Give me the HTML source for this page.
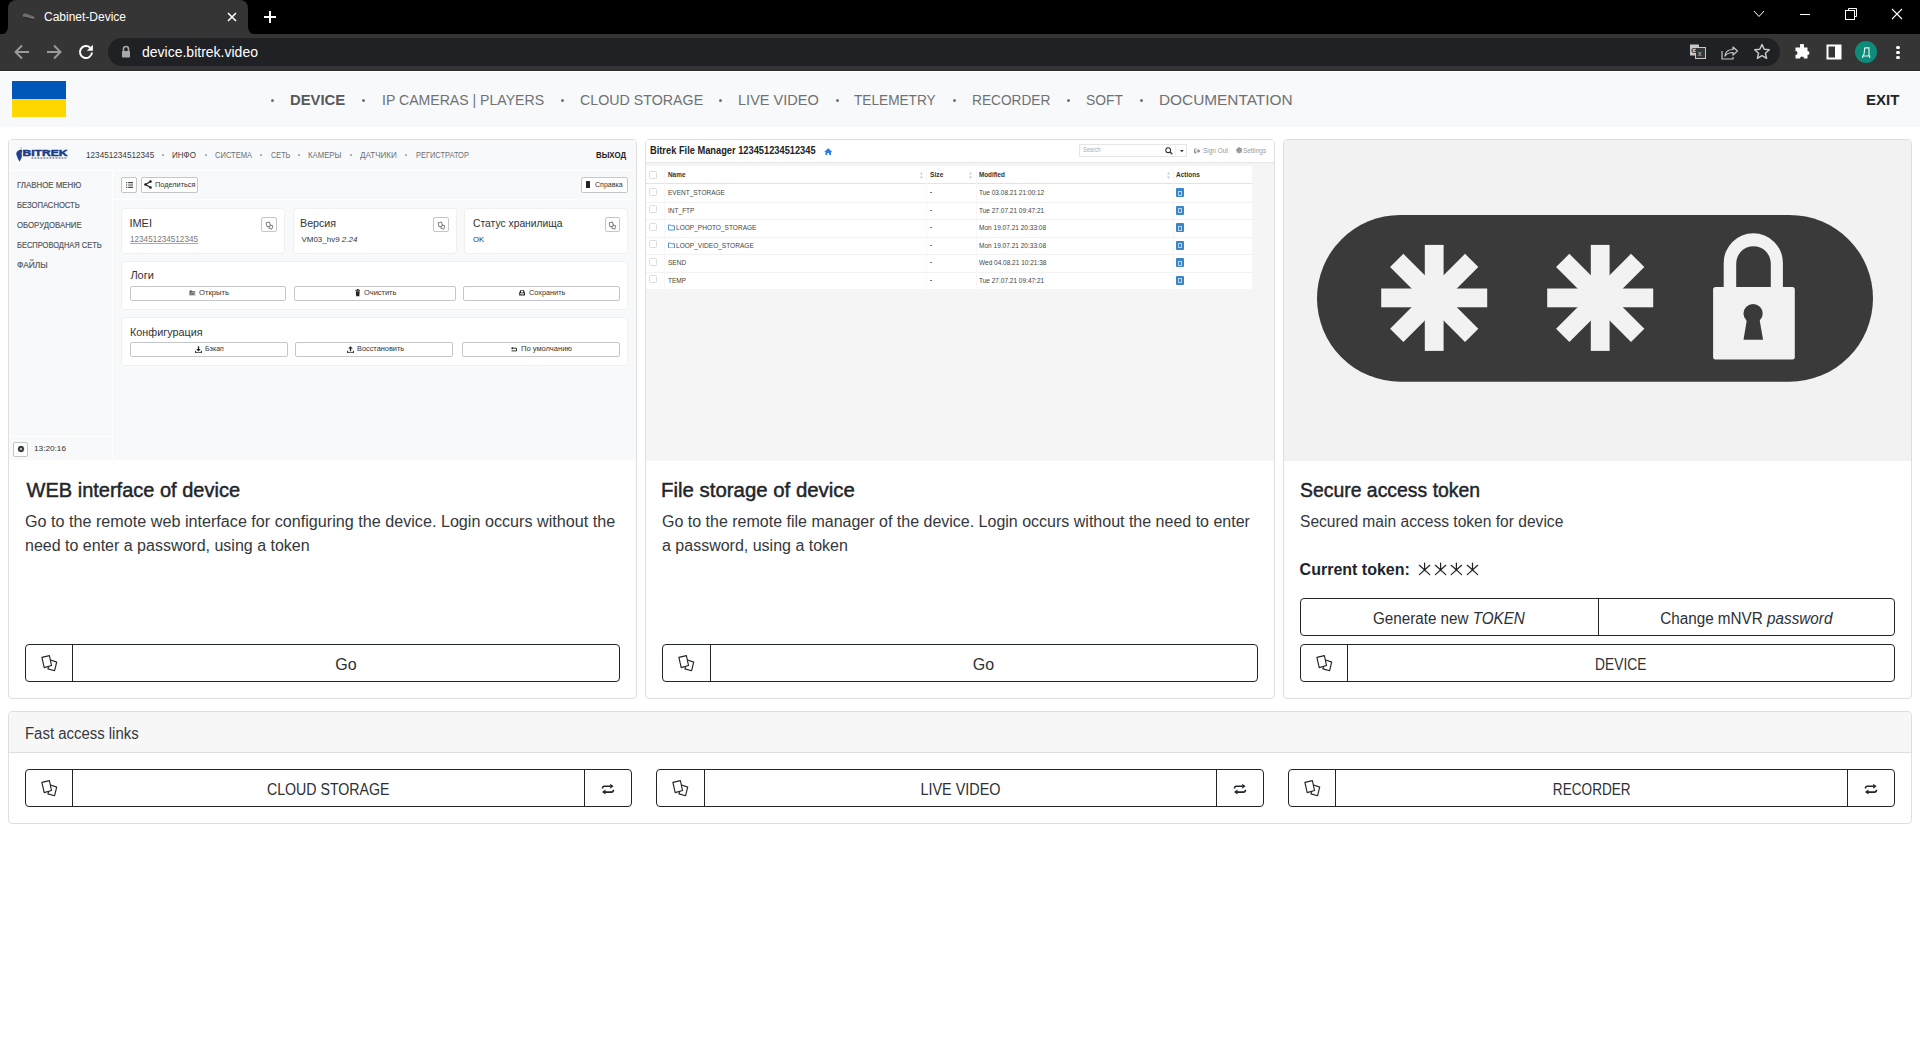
<!DOCTYPE html>
<html><head><meta charset="utf-8">
<style>
*{box-sizing:border-box;margin:0;padding:0}
html,body{width:1920px;height:1040px;overflow:hidden;background:#fff;font-family:"Liberation Sans",sans-serif;color:#212529}
.a{position:absolute}
.t{position:absolute;white-space:nowrap;line-height:1}
/* chrome */
#tabbar{left:0;top:0;width:1920px;height:34px;background:#000}
#tab{left:8px;top:0;width:240px;height:35px;background:#353535;border-radius:8px 8px 0 0}
#toolbar{left:0;top:34px;width:1920px;height:36px;background:#353535}
#sep{left:0;top:70px;width:1920px;height:1px;background:#2a2a2a}
#omni{left:108px;top:38px;width:1672px;height:28px;background:#202124;border-radius:14px}
/* page */
#nav{left:0;top:71px;width:1920px;height:56px;background:#f8f9fa;border-top:1px solid #fff}
.nl{color:#6f7173;font-size:14px}
.dot{position:absolute;width:3px;height:3px;border-radius:50%;background:#6f7173}
.card{position:absolute;border:1px solid #dfdfdf;border-radius:4px;background:#fff;overflow:hidden}
.btn{position:absolute;border:1px solid #212529;border-radius:4px;background:#fff}
.vd{position:absolute;top:0;bottom:0;width:1px;background:#212529}
</style></head><body>
<div id="tabbar" class="a"></div>
<div id="tab" class="a"></div>
<svg class="a" style="left:0;top:26px" width="8" height="9"><path d="M0 9 A8 8 0 0 0 8 1 L8 9 Z" fill="#353535"/></svg>
<svg class="a" style="left:248px;top:26px" width="8" height="9"><path d="M8 9 A8 8 0 0 1 0 1 L0 9 Z" fill="#353535"/></svg>
<div id="toolbar" class="a"></div>
<div id="sep" class="a"></div>
<div id="omni" class="a"></div>
<svg class="a" style="left:21px;top:12px" width="15" height="9"><path d="M1.5 2.5 L4 1.2 L13 4.5 L13.5 6.5 L11.5 8 L2.5 5 Z" fill="#6e6e6e"/><path d="M4 4.8 L13 7.6 L11.5 8.3 L2.8 5.5 Z" fill="#1e1e1e"/></svg>
<div class="t" style="left:44px;top:10.5px;font-size:12px;color:#fff">Cabinet-Device</div>
<svg class="a" style="left:227px;top:12px" width="10" height="10"><path d="M1 1 L9 9 M9 1 L1 9" stroke="#fff" stroke-width="1.6"/></svg>
<svg class="a" style="left:263px;top:10px" width="14" height="14"><path d="M7 1 V13 M1 7 H13" stroke="#fff" stroke-width="2"/></svg>
<svg class="a" style="left:1753px;top:10px" width="12" height="8"><path d="M1 1 L6 6.5 L11 1" stroke="#fff" stroke-width="1" fill="none"/></svg>
<div class="a" style="left:1800px;top:14px;width:10px;height:1px;background:#fff"></div>
<svg class="a" style="left:1845px;top:8px" width="12" height="12"><path d="M3.5 2.5 V0.5 H11.5 V8.5 H9.5" stroke="#fff" stroke-width="1" fill="none"/><rect x="0.5" y="2.5" width="9" height="9" stroke="#fff" stroke-width="1" fill="none"/></svg>
<svg class="a" style="left:1891px;top:8px" width="12" height="12"><path d="M1 1 L11 11 M11 1 L1 11" stroke="#fff" stroke-width="1.1"/></svg>
<svg class="a" style="left:14px;top:44px" width="16" height="16"><path d="M15 8 H2 M8 1.5 L1.5 8 L8 14.5" stroke="#9b9b9b" stroke-width="1.9" fill="none"/></svg>
<svg class="a" style="left:46px;top:44px" width="16" height="16"><path d="M1 8 H14 M8 1.5 L14.5 8 L8 14.5" stroke="#9b9b9b" stroke-width="1.9" fill="none"/></svg>
<svg class="a" style="left:78px;top:44px" width="16" height="16"><path d="M13.98 8.52 A6 6 0 1 1 12.2 3.7" stroke="#fff" stroke-width="2" fill="none"/><path d="M8.8 6.7 L14.9 6.7 L14.9 0.8 Z" fill="#fff"/></svg>
<svg class="a" style="left:121px;top:45px" width="10" height="13"><path d="M2.5 6 V4 A2.5 2.5 0 0 1 7.5 4 V6" stroke="#a8a8a8" stroke-width="1.6" fill="none"/><rect x="1" y="6" width="8" height="6.5" rx="0.8" fill="#a8a8a8"/></svg>
<div class="t" style="left:142px;top:44.9px;font-size:14px;color:#fff">device.bitrek.video</div>
<svg class="a" style="left:1689px;top:44px" width="18" height="16"><rect x="1" y="0.5" width="9" height="11" fill="#c8c8c8"/><rect x="6.5" y="3.5" width="10" height="11" fill="#353535" stroke="#c8c8c8" stroke-width="1"/><text x="2" y="9" font-size="8" font-family="Liberation Sans" fill="#353535" font-weight="bold">G</text><text x="9" y="12" font-size="7" font-family="Liberation Sans" fill="#c8c8c8">x</text></svg>
<svg class="a" style="left:1721px;top:44px" width="18" height="16"><path d="M1 7 V15 H12 V13" stroke="#c8c8c8" stroke-width="1.2" fill="none"/><path d="M4 12 C4.5 7 8 5.5 12 5.5 V3 L16.5 7 L12 11 V8.5 C8.5 8.5 6 9.5 4 12 Z" stroke="#c8c8c8" stroke-width="1.2" fill="none" stroke-linejoin="round"/></svg>
<svg class="a" style="left:1753px;top:43px" width="18" height="17"><path d="M9 1.5 L11.2 6.3 L16.3 6.8 L12.4 10.2 L13.6 15.3 L9 12.6 L4.4 15.3 L5.6 10.2 L1.7 6.8 L6.8 6.3 Z" stroke="#c8c8c8" stroke-width="1.5" fill="none" stroke-linejoin="round"/></svg>
<svg class="a" style="left:1794px;top:44px" width="16" height="16"><path d="M6 1.5 A2 2 0 0 1 10 1.5 V3.5 H13.5 V7 A2 2 0 0 1 13.5 11 V14.5 H10 A2 2 0 0 0 6 14.5 H1.5 V11 A2 2 0 0 0 1.5 7 V3.5 H6 Z" fill="#fff"/></svg>
<svg class="a" style="left:1826px;top:44px" width="16" height="16"><rect x="1.5" y="1.5" width="13" height="13" fill="none" stroke="#fff" stroke-width="2"/><rect x="9" y="1.5" width="5.5" height="13" fill="#fff"/></svg>
<div class="a" style="left:1855px;top:41px;width:22px;height:22px;border-radius:50%;background:#0f8b7a"></div>
<svg class="a" style="left:1860px;top:45.5px" width="12" height="14"><path d="M4.6 1.8 H9 V10 M4.6 1.8 C4.6 5.8 4.1 8.6 3 10 M2.1 10 H10.2 M2.6 9.8 V12 M9.7 9.8 V12" stroke="#dff5f1" stroke-width="1.15" fill="none"/></svg>
<div class="a" style="left:1896.2px;top:45.5px;width:3.6px;height:3.6px;border-radius:50%;background:#fff"></div>
<div class="a" style="left:1896.2px;top:50.5px;width:3.6px;height:3.6px;border-radius:50%;background:#fff"></div>
<div class="a" style="left:1896.2px;top:55.5px;width:3.6px;height:3.6px;border-radius:50%;background:#fff"></div>
<div id="nav" class="a"></div>
<div class="a" style="left:12px;top:81px;width:54px;height:18px;background:#0057b8"></div>
<div class="a" style="left:12px;top:99px;width:54px;height:18px;background:#ffd700"></div>

<div class="t nl" style="left:290.0px;top:91.8px;font-size:15px;font-weight:700;color:#57595c;transform:scaleX(0.989);transform-origin:0 0;">DEVICE</div>
<div class="t nl" style="left:381.5px;top:91.8px;font-size:15px;transform:scaleX(0.939);transform-origin:0 0;">IP CAMERAS | PLAYERS</div>
<div class="t nl" style="left:579.6px;top:91.8px;font-size:15px;transform:scaleX(0.949);transform-origin:0 0;">CLOUD STORAGE</div>
<div class="t nl" style="left:738.0px;top:91.8px;font-size:15px;transform:scaleX(0.970);transform-origin:0 0;">LIVE VIDEO</div>
<div class="t nl" style="left:854.1px;top:91.8px;font-size:15px;transform:scaleX(0.910);transform-origin:0 0;">TELEMETRY</div>
<div class="t nl" style="left:972.1px;top:91.8px;font-size:15px;transform:scaleX(0.913);transform-origin:0 0;">RECORDER</div>
<div class="t nl" style="left:1085.8px;top:91.8px;font-size:15px;transform:scaleX(0.923);transform-origin:0 0;">SOFT</div>
<div class="t nl" style="left:1158.6px;top:91.8px;font-size:15px;transform:scaleX(1.025);transform-origin:0 0;">DOCUMENTATION</div>
<div class="dot" style="left:270.5px;top:99px"></div>
<div class="dot" style="left:361.5px;top:99px"></div>
<div class="dot" style="left:560.5px;top:99px"></div>
<div class="dot" style="left:719.0px;top:99px"></div>
<div class="dot" style="left:835.5px;top:99px"></div>
<div class="dot" style="left:952.5px;top:99px"></div>
<div class="dot" style="left:1066.5px;top:99px"></div>
<div class="dot" style="left:1140.0px;top:99px"></div>
<div class="t" style="left:1866px;top:91.8px;font-size:15px;font-weight:700;color:#212529">EXIT</div>
<div class="card" style="left:8px;top:139px;width:629px;height:560px"><div id="img1" class="a" style="left:0;top:0;width:627px;height:320px;background:#f8f9fa"></div></div>
<div class="card" style="left:645px;top:139px;width:630px;height:560px"><div id="img2" class="a" style="left:0;top:0;width:628px;height:321px;background:#f5f5f5"></div></div>
<div class="card" style="left:1283px;top:139px;width:629px;height:560px"><div id="img3" class="a" style="left:0;top:0;width:627px;height:321px;background:#f2f2f2"></div></div>
<!--IMG1-->
<div class="a" style="left:9px;top:140px;width:627.0px;height:319.0px;background:#f8f9fa"></div>
<div class="a" style="left:9px;top:169.5px;width:627.0px;height:1.0px;background:#fff"></div>
<div class="a" style="left:112px;top:170px;width:1.0px;height:289.0px;background:#fff"></div>
<div class="a" style="left:113px;top:198.5px;width:523.0px;height:1.0px;background:#fff"></div>
<div class="a" style="left:9px;top:435.5px;width:103.0px;height:1.0px;background:#fff"></div>
<svg class="a" style="left:12px;top:144px" width="60" height="20"><path d="M4.2 10.2 C4.2 7.5 6.5 5.8 9.3 5.5 L10.3 6.5 L9.6 9.5 L10 12.5 L9.2 14.5 L7.6 17.8 L5.8 14.5 Z" fill="#22408f"/><path d="M8.5 4 L10 3.8" stroke="#8899cc" stroke-width="0.8"/><text x="10.5" y="12" font-family="Liberation Sans" font-weight="bold" font-size="9.4" fill="#1d3a86" stroke="#1d3a86" stroke-width="0.5" textLength="45" lengthAdjust="spacingAndGlyphs">BITREK</text><path d="M19.5 14 H55.6" stroke="#7d839c" stroke-width="1.4" stroke-dasharray="1.8 1.2"/></svg>
<div class="a" style="left:162px;top:154px;width:2px;height:2px;border-radius:50%;background:#999"></div>
<div class="a" style="left:205px;top:154px;width:2px;height:2px;border-radius:50%;background:#999"></div>
<div class="a" style="left:260px;top:154px;width:2px;height:2px;border-radius:50%;background:#999"></div>
<div class="a" style="left:298px;top:154px;width:2px;height:2px;border-radius:50%;background:#999"></div>
<div class="a" style="left:349.5px;top:154px;width:2px;height:2px;border-radius:50%;background:#999"></div>
<div class="a" style="left:405px;top:154px;width:2px;height:2px;border-radius:50%;background:#999"></div>
<div class="a" style="left:121.2px;top:176.5px;width:15.6px;height:16.0px;background:#fff;border:1px solid #c4c6c8;border-radius:2px;"></div>
<svg class="a" style="left:125.5px;top:181.5px" width="7" height="6"><path d="M0 0.6H1.2M0 3H1.2M0 5.4H1.2M2.2 0.6H7M2.2 3H7M2.2 5.4H7" stroke="#444" stroke-width="1.1"/></svg>
<div class="a" style="left:140.5px;top:176.5px;width:57.2px;height:16.0px;background:#fff;border:1px solid #c4c6c8;border-radius:2px;"></div>
<svg class="a" style="left:144px;top:180px" width="8" height="9"><path d="M6.5 1.5 L1.5 4.5 L6.5 7.5" stroke="#222" stroke-width="1.2" fill="none"/><circle cx="6.5" cy="1.5" r="1.3" fill="#222"/><circle cx="1.5" cy="4.5" r="1.3" fill="#222"/><circle cx="6.5" cy="7.5" r="1.3" fill="#222"/></svg>
<div class="a" style="left:581px;top:176.5px;width:47.0px;height:16.0px;background:#fff;border:1px solid #c4c6c8;border-radius:2px;"></div>
<div class="a" style="left:586px;top:181px;width:4.0px;height:7.0px;background:#222;border-radius:0.5px"></div>
<div class="a" style="left:122px;top:209px;width:162.0px;height:44.0px;background:#fff;border-radius:3px;box-shadow:0 0 0 1px #eef0f2;"></div>
<div class="a" style="left:293.5px;top:209px;width:162.5px;height:44.0px;background:#fff;border-radius:3px;box-shadow:0 0 0 1px #eef0f2;"></div>
<div class="a" style="left:464.7px;top:209px;width:162.3px;height:44.0px;background:#fff;border-radius:3px;box-shadow:0 0 0 1px #eef0f2;"></div>
<div class="a" style="left:261.3px;top:217.3px;width:15.4px;height:15.1px;background:#fff;border:1px solid #c4c6c8;border-radius:2px;"></div>
<svg class="a" style="left:264.8px;top:220.5px" width="9" height="9"><path d="M4.8 3.8 L7.8 4.8 L6.8 8.2 L3.8 7.2 Z" fill="#fff" stroke="#555" stroke-width="0.75"/><path d="M1.2 1.8 L4.6 1 L5.4 5 L2 5.8 Z" fill="#fff" stroke="#555" stroke-width="0.75"/></svg>
<div class="a" style="left:433.2px;top:217.3px;width:15.4px;height:15.1px;background:#fff;border:1px solid #c4c6c8;border-radius:2px;"></div>
<svg class="a" style="left:436.7px;top:220.5px" width="9" height="9"><path d="M4.8 3.8 L7.8 4.8 L6.8 8.2 L3.8 7.2 Z" fill="#fff" stroke="#555" stroke-width="0.75"/><path d="M1.2 1.8 L4.6 1 L5.4 5 L2 5.8 Z" fill="#fff" stroke="#555" stroke-width="0.75"/></svg>
<div class="a" style="left:604.7px;top:217.3px;width:15.4px;height:15.1px;background:#fff;border:1px solid #c4c6c8;border-radius:2px;"></div>
<svg class="a" style="left:608.2px;top:220.5px" width="9" height="9"><path d="M4.8 3.8 L7.8 4.8 L6.8 8.2 L3.8 7.2 Z" fill="#fff" stroke="#555" stroke-width="0.75"/><path d="M1.2 1.8 L4.6 1 L5.4 5 L2 5.8 Z" fill="#fff" stroke="#555" stroke-width="0.75"/></svg>
<div class="a" style="left:122px;top:262px;width:505.0px;height:46.5px;background:#fff;border-radius:3px;box-shadow:0 0 0 1px #eef0f2;"></div>
<div class="a" style="left:122px;top:318px;width:505.0px;height:46.5px;background:#fff;border-radius:3px;box-shadow:0 0 0 1px #eef0f2;"></div>
<div class="a" style="left:130px;top:285.7px;width:156.4px;height:14.9px;background:#fff;border:1px solid #c4c6c8;border-radius:2px;"></div>
<div class="a" style="left:294px;top:285.7px;width:161.5px;height:14.9px;background:#fff;border:1px solid #c4c6c8;border-radius:2px;"></div>
<div class="a" style="left:463.3px;top:285.7px;width:156.4px;height:14.9px;background:#fff;border:1px solid #c4c6c8;border-radius:2px;"></div>
<div class="a" style="left:130px;top:341.5px;width:157.7px;height:15.8px;background:#fff;border:1px solid #c4c6c8;border-radius:2px;"></div>
<div class="a" style="left:295.4px;top:341.5px;width:158.1px;height:15.8px;background:#fff;border:1px solid #c4c6c8;border-radius:2px;"></div>
<div class="a" style="left:461.7px;top:341.5px;width:158.0px;height:15.8px;background:#fff;border:1px solid #c4c6c8;border-radius:2px;"></div>
<svg class="a" style="left:188.9px;top:290.2px" width="7" height="6"><path d="M0.5 0.5 H2.8 L3.4 1.2 H6.2 V5.5 H0.5 Z" fill="#555"/><path d="M1.2 5.4 L2.2 2.6 H6.6 L5.6 5.4 Z" fill="#fff"/><path d="M1.5 5 L2.4 3 H6 L5.2 5 Z" fill="#777"/></svg>
<svg class="a" style="left:354.8px;top:289.3px" width="5.5" height="7.5"><path d="M0.3 1.3 H5.2 M2 0.5 H3.5" stroke="#222" stroke-width="1"/><path d="M0.8 2.2 H4.7 L4.3 7.2 H1.2 Z" fill="#222"/></svg>
<svg class="a" style="left:519px;top:290.4px" width="6.2" height="5.6"><path d="M1.2 0.3 H5 L6 3 V5.4 H0.2 V3 Z" fill="#222"/><rect x="1.2" y="3.3" width="3.8" height="1.1" fill="#fff"/><rect x="2" y="0.9" width="2.2" height="1.6" fill="#fff"/></svg>
<svg class="a" style="left:194.7px;top:345.6px" width="7" height="7.5"><path d="M3.5 0.3 V4.6" stroke="#222" stroke-width="1.3"/><path d="M1.3 3 L3.5 5.4 L5.7 3 Z" fill="#222"/><path d="M0.6 4.8 V6.8 H6.4 V4.8" stroke="#333" stroke-width="1.1" fill="none"/></svg>
<svg class="a" style="left:346.9px;top:345.6px" width="7" height="7.5"><path d="M3.5 2 V5.3" stroke="#222" stroke-width="1.3"/><path d="M1.2 2.6 L3.5 0.2 L5.8 2.6 Z" fill="#222"/><path d="M0.6 4.8 V6.8 H6.4 V4.8" stroke="#333" stroke-width="1.1" fill="none"/></svg>
<svg class="a" style="left:511.2px;top:347px" width="6" height="5"><path d="M0.5 1.2 H5.5 M5.5 3.9 H0.5 M5.5 1.2 V3.9" stroke="#333" stroke-width="1"/><path d="M2 0 L0 1.2 L2 2.4 Z" fill="#333"/></svg>
<div class="a" style="left:13px;top:441.5px;width:14.7px;height:15.0px;background:#fff;border:1px solid #c4c6c8;border-radius:2px;"></div>
<svg class="a" style="left:16.5px;top:445px" width="8" height="8"><circle cx="4" cy="4" r="2.2" fill="none" stroke="#222" stroke-width="1.4"/><path d="M4 0.8V7.2M0.8 4H7.2M1.7 1.7L6.3 6.3M6.3 1.7L1.7 6.3" stroke="#222" stroke-width="0.9"/><circle cx="4" cy="4" r="0.9" fill="#fff"/></svg>
<div class="t" style="left:85.5px;top:150.9px;font-size:8.4px;color:#3a3d40;transform:scaleX(0.976);transform-origin:0 0;">123451234512345</div>
<div class="t" style="left:172.0px;top:150.9px;font-size:8.4px;color:#3a3d40;transform:scaleX(0.960);transform-origin:0 0;">ИНФО</div>
<div class="t" style="left:215.0px;top:150.9px;font-size:8.4px;color:#6c6f73;transform:scaleX(0.902);transform-origin:0 0;">СИСТЕМА</div>
<div class="t" style="left:270.5px;top:150.9px;font-size:8.4px;color:#6c6f73;transform:scaleX(0.873);transform-origin:0 0;">СЕТЬ</div>
<div class="t" style="left:308.0px;top:150.9px;font-size:8.4px;color:#6c6f73;transform:scaleX(0.925);transform-origin:0 0;">КАМЕРЫ</div>
<div class="t" style="left:359.7px;top:150.9px;font-size:8.4px;color:#6c6f73;transform:scaleX(0.963);transform-origin:0 0;">ДАТЧИКИ</div>
<div class="t" style="left:415.5px;top:150.9px;font-size:8.4px;color:#6c6f73;transform:scaleX(0.890);transform-origin:0 0;">РЕГИСТРАТОР</div>
<div class="t" style="left:595.5px;top:150.9px;font-size:8.4px;font-weight:700;color:#222;transform:scaleX(0.938);transform-origin:0 0;">ВЫХОД</div>
<div class="t" style="left:17.0px;top:180.9px;font-size:8.4px;color:#505357;-webkit-text-stroke:0.15px #505357;transform:scaleX(0.941);transform-origin:0 0;">ГЛАВНОЕ МЕНЮ</div>
<div class="t" style="left:17.0px;top:200.9px;font-size:8.4px;color:#505357;-webkit-text-stroke:0.15px #505357;transform:scaleX(0.913);transform-origin:0 0;">БЕЗОПАСНОСТЬ</div>
<div class="t" style="left:17.0px;top:220.9px;font-size:8.4px;color:#505357;-webkit-text-stroke:0.15px #505357;transform:scaleX(0.929);transform-origin:0 0;">ОБОРУДОВАНИЕ</div>
<div class="t" style="left:17.0px;top:240.9px;font-size:8.4px;color:#505357;-webkit-text-stroke:0.15px #505357;transform:scaleX(0.895);transform-origin:0 0;">БЕСПРОВОДНАЯ СЕТЬ</div>
<div class="t" style="left:17.0px;top:260.9px;font-size:8.4px;color:#505357;-webkit-text-stroke:0.15px #505357;">ФАЙЛЫ</div>
<div class="t" style="left:154.7px;top:181.2px;font-size:8px;color:#333;transform:scaleX(0.916);transform-origin:0 0;">Поделиться</div>
<div class="t" style="left:595.0px;top:181.2px;font-size:8px;color:#333;transform:scaleX(0.884);transform-origin:0 0;">Справка</div>
<div class="t" style="left:129.4px;top:217.7px;font-size:11px;color:#333;">IMEI</div>
<div class="t" style="left:130.4px;top:235.2px;font-size:8.4px;color:#7a7a7a;text-decoration:underline;text-decoration-color:#aaa;transform:scaleX(0.973);transform-origin:0 0;">123451234512345</div>
<div class="t" style="left:300.4px;top:217.7px;font-size:11px;color:#333;transform:scaleX(0.972);transform-origin:0 0;">Версия</div>
<div class="t" style="left:301.4px;top:235.8px;font-size:8px;color:#333;">VM03_hv9 <i>2.24</i></div>
<div class="t" style="left:473.0px;top:217.7px;font-size:11px;color:#333;transform:scaleX(0.938);transform-origin:0 0;">Статус хранилища</div>
<div class="t" style="left:473.0px;top:235.8px;font-size:8px;color:#333;transform:scaleX(0.955);transform-origin:0 0;">OK</div>
<div class="t" style="left:130.4px;top:270.4px;font-size:11px;color:#333;">Логи</div>
<div class="t" style="left:129.5px;top:326.5px;font-size:11px;color:#333;transform:scaleX(0.983);transform-origin:0 0;">Конфигурация</div>
<div class="t" style="left:199.4px;top:289.2px;font-size:8px;color:#333;transform:scaleX(0.952);transform-origin:0 0;">Открыть</div>
<div class="t" style="left:364.4px;top:289.2px;font-size:8px;color:#333;transform:scaleX(0.929);transform-origin:0 0;">Очистить</div>
<div class="t" style="left:529.0px;top:289.2px;font-size:8px;color:#333;transform:scaleX(0.915);transform-origin:0 0;">Сохранить</div>
<div class="t" style="left:205.2px;top:345.2px;font-size:8px;color:#333;transform:scaleX(0.859);transform-origin:0 0;">Бэкап</div>
<div class="t" style="left:357.1px;top:345.2px;font-size:8px;color:#333;transform:scaleX(0.920);transform-origin:0 0;">Восстановить</div>
<div class="t" style="left:521.0px;top:345.2px;font-size:8px;color:#333;transform:scaleX(0.943);transform-origin:0 0;">По умолчанию</div>
<div class="t" style="left:33.7px;top:444.7px;font-size:8px;color:#333;transform:scaleX(1.027);transform-origin:0 0;">13:20:16</div>
<!--/IMG1-->
<!--IMG2-->
<div class="a" style="left:646px;top:140px;width:628.0px;height:320.0px;background:#f5f5f5"></div>
<div class="a" style="left:646px;top:140px;width:628.0px;height:21.5px;background:#fff"></div>
<div class="a" style="left:646px;top:161.5px;width:628.0px;height:1.5px;background:#e6e6e6"></div>
<div class="a" style="left:646px;top:165.7px;width:605.7px;height:123.3px;background:#fff"></div>
<div class="a" style="left:646px;top:182.5px;width:605.7px;height:1.5px;background:#e3e3e3"></div>
<div class="a" style="left:646px;top:201.5px;width:605.7px;height:0.8px;background:#f2f2f2"></div>
<div class="a" style="left:646px;top:219px;width:605.7px;height:0.8px;background:#f2f2f2"></div>
<div class="a" style="left:646px;top:236.5px;width:605.7px;height:0.8px;background:#f2f2f2"></div>
<div class="a" style="left:646px;top:254px;width:605.7px;height:0.8px;background:#f2f2f2"></div>
<div class="a" style="left:646px;top:271.5px;width:605.7px;height:0.8px;background:#f2f2f2"></div>
<div class="a" style="left:664.3px;top:165.7px;width:0.8px;height:123.3px;background:#f7f7f7"></div>
<div class="a" style="left:926.2px;top:165.7px;width:0.8px;height:123.3px;background:#f7f7f7"></div>
<div class="a" style="left:975.8px;top:165.7px;width:0.8px;height:123.3px;background:#f7f7f7"></div>
<div class="a" style="left:1173.3px;top:165.7px;width:0.8px;height:123.3px;background:#f7f7f7"></div>
<div class="a" style="left:649px;top:170.7px;width:8.0px;height:8.0px;border:1px solid #ddd;border-radius:1.5px;background:#fff"></div>
<div class="a" style="left:649px;top:187.8px;width:8.0px;height:8.0px;border:1px solid #ddd;border-radius:1.5px;background:#fff"></div>
<div class="a" style="left:649px;top:205.3px;width:8.0px;height:8.0px;border:1px solid #ddd;border-radius:1.5px;background:#fff"></div>
<div class="a" style="left:649px;top:222.8px;width:8.0px;height:8.0px;border:1px solid #ddd;border-radius:1.5px;background:#fff"></div>
<div class="a" style="left:649px;top:240.3px;width:8.0px;height:8.0px;border:1px solid #ddd;border-radius:1.5px;background:#fff"></div>
<div class="a" style="left:649px;top:257.8px;width:8.0px;height:8.0px;border:1px solid #ddd;border-radius:1.5px;background:#fff"></div>
<div class="a" style="left:649px;top:275.3px;width:8.0px;height:8.0px;border:1px solid #ddd;border-radius:1.5px;background:#fff"></div>
<svg class="a" style="left:920.3px;top:171.5px" width="3" height="7"><path d="M1.5 0 L3 2.5 H0 Z M1.5 7 L3 4.5 H0 Z" fill="#ccc"/></svg>
<svg class="a" style="left:969.3px;top:171.5px" width="3" height="7"><path d="M1.5 0 L3 2.5 H0 Z M1.5 7 L3 4.5 H0 Z" fill="#ccc"/></svg>
<svg class="a" style="left:1166.5px;top:171.5px" width="3" height="7"><path d="M1.5 0 L3 2.5 H0 Z M1.5 7 L3 4.5 H0 Z" fill="#ccc"/></svg>
<svg class="a" style="left:823.5px;top:147.5px" width="8.5" height="7.5"><path d="M4.25 0.3 L8.3 4 H7 V7.3 H5.2 V5 H3.3 V7.3 H1.5 V4 H0.2 Z" fill="#2a7de1"/></svg>
<div class="a" style="left:1079.2px;top:144px;width:108.3px;height:13.3px;border:1px solid #e6e6e6;background:#fff"></div>
<div class="a" style="left:1175px;top:144px;width:0.8px;height:13.3px;background:#eee"></div>
<svg class="a" style="left:1165px;top:147px" width="8" height="8"><circle cx="3.2" cy="3.2" r="2.4" fill="none" stroke="#333" stroke-width="1.1"/><path d="M5 5 L7.3 7.3" stroke="#333" stroke-width="1.3"/></svg>
<svg class="a" style="left:1179.5px;top:149.5px" width="4" height="3"><path d="M0 0 H3.6 L1.8 2.2 Z" fill="#333"/></svg>
<svg class="a" style="left:1194px;top:147.5px" width="7" height="6"><path d="M0.5 1 H2.5 M0.5 1 V5 H2.5 M2.5 3 H5 M4 1.5 L6 3 L4 4.5 Z" stroke="#999" stroke-width="1" fill="#999"/></svg>
<svg class="a" style="left:1235.5px;top:147.3px" width="6.5" height="6.5"><circle cx="3.25" cy="3.25" r="2" fill="none" stroke="#999" stroke-width="1.6"/><path d="M3.25 0 V6.5 M0 3.25 H6.5 M1 1 L5.5 5.5 M5.5 1 L1 5.5" stroke="#999" stroke-width="1"/></svg>
<svg class="a" style="left:667.5px;top:224.0px" width="7" height="6.5"><path d="M0.5 1 H2.8 L3.5 1.8 H6.5 V6 H0.5 Z" fill="none" stroke="#3d8bd6" stroke-width="0.9"/></svg>
<svg class="a" style="left:667.5px;top:241.5px" width="7" height="6.5"><path d="M0.5 1 H2.8 L3.5 1.8 H6.5 V6 H0.5 Z" fill="none" stroke="#3d8bd6" stroke-width="0.9"/></svg>
<div class="a" style="left:1176.2px;top:188.2px;width:8.0px;height:9.0px;background:#3a85c5;border-radius:1px"></div>
<div class="a" style="left:1178.3px;top:190.5px;width:3.8px;height:5.0px;border:0.8px solid #b8d3ee;border-radius:0.5px"></div>
<div class="a" style="left:1176.2px;top:205.7px;width:8.0px;height:9.0px;background:#3a85c5;border-radius:1px"></div>
<div class="a" style="left:1178.3px;top:208.0px;width:3.8px;height:5.0px;border:0.8px solid #b8d3ee;border-radius:0.5px"></div>
<div class="a" style="left:1176.2px;top:223.2px;width:8.0px;height:9.0px;background:#3a85c5;border-radius:1px"></div>
<div class="a" style="left:1178.3px;top:225.5px;width:3.8px;height:5.0px;border:0.8px solid #b8d3ee;border-radius:0.5px"></div>
<div class="a" style="left:1176.2px;top:240.7px;width:8.0px;height:9.0px;background:#3a85c5;border-radius:1px"></div>
<div class="a" style="left:1178.3px;top:243.0px;width:3.8px;height:5.0px;border:0.8px solid #b8d3ee;border-radius:0.5px"></div>
<div class="a" style="left:1176.2px;top:258.2px;width:8.0px;height:9.0px;background:#3a85c5;border-radius:1px"></div>
<div class="a" style="left:1178.3px;top:260.5px;width:3.8px;height:5.0px;border:0.8px solid #b8d3ee;border-radius:0.5px"></div>
<div class="a" style="left:1176.2px;top:275.7px;width:8.0px;height:9.0px;background:#3a85c5;border-radius:1px"></div>
<div class="a" style="left:1178.3px;top:278.0px;width:3.8px;height:5.0px;border:0.8px solid #b8d3ee;border-radius:0.5px"></div>
<div class="a" style="left:930.3px;top:192px;width:2.0px;height:0.8px;background:#777"></div>
<div class="a" style="left:930.3px;top:210px;width:2.0px;height:0.8px;background:#777"></div>
<div class="a" style="left:930.3px;top:227px;width:2.0px;height:0.8px;background:#777"></div>
<div class="a" style="left:930.3px;top:245px;width:2.0px;height:0.8px;background:#777"></div>
<div class="a" style="left:930.3px;top:262px;width:2.0px;height:0.8px;background:#777"></div>
<div class="a" style="left:930.3px;top:280px;width:2.0px;height:0.8px;background:#777"></div>
<div class="t" style="left:649.8px;top:145.8px;font-size:10px;font-weight:700;color:#222;transform:scaleX(0.928);transform-origin:0 0;">Bitrek File Manager 123451234512345</div>
<div class="t" style="left:1083.3px;top:147.2px;font-size:6.5px;color:#aaa;transform:scaleX(0.857);transform-origin:0 0;">Search</div>
<div class="t" style="left:1203.0px;top:146.9px;font-size:7.5px;color:#999;transform:scaleX(0.862);transform-origin:0 0;">Sign Out</div>
<div class="t" style="left:1243.3px;top:146.9px;font-size:7.5px;color:#999;transform:scaleX(0.852);transform-origin:0 0;">Settings</div>
<div class="t" style="left:668.2px;top:170.8px;font-size:7.7px;font-weight:700;color:#333;transform:scaleX(0.833);transform-origin:0 0;">Name</div>
<div class="t" style="left:929.8px;top:170.8px;font-size:7.7px;font-weight:700;color:#333;transform:scaleX(0.867);transform-origin:0 0;">Size</div>
<div class="t" style="left:978.7px;top:170.8px;font-size:7.7px;font-weight:700;color:#333;transform:scaleX(0.822);transform-origin:0 0;">Modified</div>
<div class="t" style="left:1176.3px;top:170.8px;font-size:7.7px;font-weight:700;color:#333;transform:scaleX(0.846);transform-origin:0 0;">Actions</div>
<div class="t" style="left:668.2px;top:188.5px;font-size:7.7px;color:#444;transform:scaleX(0.845);transform-origin:0 0;">EVENT_STORAGE</div>
<div class="t" style="left:978.7px;top:188.5px;font-size:7.7px;color:#444;transform:scaleX(0.845);transform-origin:0 0;">Tue 03.08.21 21:00:12</div>
<div class="t" style="left:668.2px;top:206.5px;font-size:7.7px;color:#444;transform:scaleX(0.848);transform-origin:0 0;">INT_FTP</div>
<div class="t" style="left:978.7px;top:206.5px;font-size:7.7px;color:#444;transform:scaleX(0.845);transform-origin:0 0;">Tue 27.07.21 09:47:21</div>
<div class="t" style="left:675.7px;top:223.5px;font-size:7.7px;color:#444;transform:scaleX(0.851);transform-origin:0 0;">LOOP_PHOTO_STORAGE</div>
<div class="t" style="left:978.7px;top:223.5px;font-size:7.7px;color:#444;transform:scaleX(0.849);transform-origin:0 0;">Mon 19.07.21 20:33:08</div>
<div class="t" style="left:675.7px;top:241.5px;font-size:7.7px;color:#444;transform:scaleX(0.852);transform-origin:0 0;">LOOP_VIDEO_STORAGE</div>
<div class="t" style="left:978.7px;top:241.5px;font-size:7.7px;color:#444;transform:scaleX(0.849);transform-origin:0 0;">Mon 19.07.21 20:33:08</div>
<div class="t" style="left:668.2px;top:258.5px;font-size:7.7px;color:#444;transform:scaleX(0.848);transform-origin:0 0;">SEND</div>
<div class="t" style="left:978.7px;top:258.5px;font-size:7.7px;color:#444;transform:scaleX(0.845);transform-origin:0 0;">Wed 04.08.21 10:21:38</div>
<div class="t" style="left:668.2px;top:276.5px;font-size:7.7px;color:#444;transform:scaleX(0.848);transform-origin:0 0;">TEMP</div>
<div class="t" style="left:978.7px;top:276.5px;font-size:7.7px;color:#444;transform:scaleX(0.845);transform-origin:0 0;">Tue 27.07.21 09:47:21</div>
<!--/IMG2-->
<!--IMG3-->
<svg class="a" style="left:1284px;top:140px" width="627" height="320">
<rect x="0" y="0" width="627" height="320" fill="#f2f2f2"/>
<rect x="33" y="75" width="556" height="166.7" rx="83.35" fill="#3a3a3b"/>
<g fill="#f2f2f2"><rect x="97.2" y="148.5" width="106" height="18.8" transform="rotate(0 150.2 157.9)"/><rect x="97.2" y="148.5" width="106" height="18.8" transform="rotate(45 150.2 157.9)"/><rect x="97.2" y="148.5" width="106" height="18.8" transform="rotate(90 150.2 157.9)"/><rect x="97.2" y="148.5" width="106" height="18.8" transform="rotate(135 150.2 157.9)"/><rect x="263.2" y="148.5" width="106" height="18.8" transform="rotate(0 316.2 157.9)"/><rect x="263.2" y="148.5" width="106" height="18.8" transform="rotate(45 316.2 157.9)"/><rect x="263.2" y="148.5" width="106" height="18.8" transform="rotate(90 316.2 157.9)"/><rect x="263.2" y="148.5" width="106" height="18.8" transform="rotate(135 316.2 157.9)"/></g>
<path d="M439.7 147.0 V122.8 A29.6 29.6 0 0 1 498.9 122.8 V147.0 H486.8 V123.5 A17.3 17.3 0 0 0 452.2 123.5 V147.0 Z" fill="#f2f2f2"/>
<rect x="429.1" y="146.9" width="81.7" height="72.7" rx="2.5" fill="#f2f2f2"/>
<circle cx="469.1" cy="173.5" r="9.6" fill="#3a3a3b"/>
<path d="M463.5 176.0 L459.5 199.8 H479.1 L474.9 176.0 Z" fill="#3a3a3b"/>
</svg>
<!--/IMG3-->
<div class="t" style="left:26.6px;top:480px;font-size:20px;-webkit-text-stroke:0.45px #212529">WEB interface of device</div>
<div class="t" style="color:#34383c;left:25px;top:514px;font-size:16px;transform:scaleX(1.01);transform-origin:0 0">Go to the remote web interface for configuring the device. Login occurs without the</div>
<div class="t" style="color:#34383c;left:25px;top:538px;font-size:16px">need to enter a password, using a token</div>
<div class="t" style="left:661px;top:480px;font-size:20px;-webkit-text-stroke:0.45px #212529;transform:scaleX(1.02);transform-origin:0 0">File storage of device</div>
<div class="t" style="color:#34383c;left:662px;top:514px;font-size:16px">Go to the remote file manager of the device. Login occurs without the need to enter</div>
<div class="t" style="color:#34383c;left:662px;top:538px;font-size:16px">a password, using a token</div>
<div class="t" style="left:1299.6px;top:480px;font-size:20px;-webkit-text-stroke:0.45px #212529;transform:scaleX(0.97);transform-origin:0 0">Secure access token</div>
<div class="t" style="color:#34383c;left:1299.6px;top:514px;font-size:16px;transform:scaleX(0.974);transform-origin:0 0">Secured main access token for device</div>
<div class="t" style="left:1299.6px;top:561.5px;font-size:16px;font-weight:700">Current token:</div>
<svg class="a" style="left:1414px;top:558px" width="70" height="22"><g stroke="#212529" stroke-width="1.25" stroke-linecap="round"><path id="ast" d="M10.6 5 V11.3 M5.4 7.3 L15.8 16.6 M15.8 7.3 L5.4 16.6"/><use href="#ast" x="16"/><use href="#ast" x="31.8"/><use href="#ast" x="47.9"/></g></svg>
<div class="btn" style="left:1300px;top:598px;width:595px;height:38px"><div class="vd" style="left:296.5px"></div><div style="position:absolute;left:0px;top:11.8px;width:296px;text-align:center;line-height:1;font-size:16px;white-space:nowrap;color:#2c3034"><span style="display:inline-block;transform:scaleX(0.950);">Generate new <i>TOKEN</i></span></div><div style="position:absolute;left:297px;top:11.8px;width:296px;text-align:center;line-height:1;font-size:16px;white-space:nowrap;color:#2c3034"><span style="display:inline-block;transform:scaleX(0.954);">Change mNVR <i>password</i></span></div></div>
<div class="btn" style="left:25px;top:644px;width:595px;height:38px"><svg width="20" height="20" style="position:absolute;left:13.2px;top:8.3px"><path d="M11.7 7 L17.7 9.1 L15.6 17.7 L8.9 15.9 Z" fill="#fff" stroke="#212529" stroke-width="1.15" stroke-linejoin="round"/><path d="M2.9 4.4 L10.4 2.6 L12.5 12.5 L5.2 14.6 Z" fill="#fff" stroke="#212529" stroke-width="1.15" stroke-linejoin="round"/></svg><div class="vd" style="left:46px"></div><div style="position:absolute;left:47px;top:12.4px;width:546px;text-align:center;line-height:1;font-size:16px;white-space:nowrap;color:#2c3034"><span style="display:inline-block;">Go</span></div></div>
<div class="btn" style="left:662px;top:644px;width:596px;height:38px"><svg width="20" height="20" style="position:absolute;left:13.2px;top:8.3px"><path d="M11.7 7 L17.7 9.1 L15.6 17.7 L8.9 15.9 Z" fill="#fff" stroke="#212529" stroke-width="1.15" stroke-linejoin="round"/><path d="M2.9 4.4 L10.4 2.6 L12.5 12.5 L5.2 14.6 Z" fill="#fff" stroke="#212529" stroke-width="1.15" stroke-linejoin="round"/></svg><div class="vd" style="left:47px"></div><div style="position:absolute;left:47px;top:12.4px;width:547px;text-align:center;line-height:1;font-size:16px;white-space:nowrap;color:#2c3034"><span style="display:inline-block;">Go</span></div></div>
<div class="btn" style="left:1300px;top:644px;width:595px;height:38px"><svg width="20" height="20" style="position:absolute;left:13.2px;top:8.3px"><path d="M11.7 7 L17.7 9.1 L15.6 17.7 L8.9 15.9 Z" fill="#fff" stroke="#212529" stroke-width="1.15" stroke-linejoin="round"/><path d="M2.9 4.4 L10.4 2.6 L12.5 12.5 L5.2 14.6 Z" fill="#fff" stroke="#212529" stroke-width="1.15" stroke-linejoin="round"/></svg><div class="vd" style="left:46px"></div><div style="position:absolute;left:47px;top:12.4px;width:546px;text-align:center;line-height:1;font-size:16px;white-space:nowrap;color:#2c3034"><span style="display:inline-block;transform:scaleX(0.862);">DEVICE</span></div></div>
<div class="card" style="left:8px;top:711px;width:1904px;height:113px"><div class="a" style="left:0;top:0;width:1902px;height:41px;background:#f7f7f7;border-bottom:1px solid #dfdfdf"></div></div>
<div class="t" style="color:#34383c;left:24.5px;top:725.8px;font-size:16px;transform:scaleX(0.933);transform-origin:0 0">Fast access links</div>
<div class="btn" style="left:25px;top:769px;width:607px;height:38px"><svg width="20" height="20" style="position:absolute;left:13.2px;top:8.3px"><path d="M11.7 7 L17.7 9.1 L15.6 17.7 L8.9 15.9 Z" fill="#fff" stroke="#212529" stroke-width="1.15" stroke-linejoin="round"/><path d="M2.9 4.4 L10.4 2.6 L12.5 12.5 L5.2 14.6 Z" fill="#fff" stroke="#212529" stroke-width="1.15" stroke-linejoin="round"/></svg><div class="vd" style="left:46px"></div><div class="vd" style="left:558px"></div><div style="position:absolute;left:47px;top:12.4px;width:511px;text-align:center;line-height:1;font-size:16px;white-space:nowrap;color:#2c3034"><span style="display:inline-block;transform:scaleX(0.886);">CLOUD STORAGE</span></div><svg width="16" height="14" style="position:absolute;left:574px;top:13px"><path d="M2.5 5.5 C2.5 4 3 3.3 4.5 3.3 H10.5" stroke="#212529" stroke-width="1.6" fill="none"/><path d="M10.2 0.8 L13.6 3.3 L10.2 5.8 Z" fill="#212529"/><path d="M13.5 6.8 C13.5 8.3 13 9.1 11.5 9.1 H5" stroke="#212529" stroke-width="1.6" fill="none"/><path d="M5.5 6.6 L2 9.1 L5.5 11.6 Z" fill="#212529"/></svg></div>
<div class="btn" style="left:656px;top:769px;width:608px;height:38px"><svg width="20" height="20" style="position:absolute;left:13.2px;top:8.3px"><path d="M11.7 7 L17.7 9.1 L15.6 17.7 L8.9 15.9 Z" fill="#fff" stroke="#212529" stroke-width="1.15" stroke-linejoin="round"/><path d="M2.9 4.4 L10.4 2.6 L12.5 12.5 L5.2 14.6 Z" fill="#fff" stroke="#212529" stroke-width="1.15" stroke-linejoin="round"/></svg><div class="vd" style="left:47px"></div><div class="vd" style="left:559px"></div><div style="position:absolute;left:47px;top:12.4px;width:512px;text-align:center;line-height:1;font-size:16px;white-space:nowrap;color:#2c3034"><span style="display:inline-block;transform:scaleX(0.900);">LIVE VIDEO</span></div><svg width="16" height="14" style="position:absolute;left:575px;top:13px"><path d="M2.5 5.5 C2.5 4 3 3.3 4.5 3.3 H10.5" stroke="#212529" stroke-width="1.6" fill="none"/><path d="M10.2 0.8 L13.6 3.3 L10.2 5.8 Z" fill="#212529"/><path d="M13.5 6.8 C13.5 8.3 13 9.1 11.5 9.1 H5" stroke="#212529" stroke-width="1.6" fill="none"/><path d="M5.5 6.6 L2 9.1 L5.5 11.6 Z" fill="#212529"/></svg></div>
<div class="btn" style="left:1288px;top:769px;width:607px;height:38px"><svg width="20" height="20" style="position:absolute;left:13.2px;top:8.3px"><path d="M11.7 7 L17.7 9.1 L15.6 17.7 L8.9 15.9 Z" fill="#fff" stroke="#212529" stroke-width="1.15" stroke-linejoin="round"/><path d="M2.9 4.4 L10.4 2.6 L12.5 12.5 L5.2 14.6 Z" fill="#fff" stroke="#212529" stroke-width="1.15" stroke-linejoin="round"/></svg><div class="vd" style="left:46px"></div><div class="vd" style="left:558px"></div><div style="position:absolute;left:47px;top:12.4px;width:511px;text-align:center;line-height:1;font-size:16px;white-space:nowrap;color:#2c3034"><span style="display:inline-block;transform:scaleX(0.850);">RECORDER</span></div><svg width="16" height="14" style="position:absolute;left:574px;top:13px"><path d="M2.5 5.5 C2.5 4 3 3.3 4.5 3.3 H10.5" stroke="#212529" stroke-width="1.6" fill="none"/><path d="M10.2 0.8 L13.6 3.3 L10.2 5.8 Z" fill="#212529"/><path d="M13.5 6.8 C13.5 8.3 13 9.1 11.5 9.1 H5" stroke="#212529" stroke-width="1.6" fill="none"/><path d="M5.5 6.6 L2 9.1 L5.5 11.6 Z" fill="#212529"/></svg></div>
</body></html>
